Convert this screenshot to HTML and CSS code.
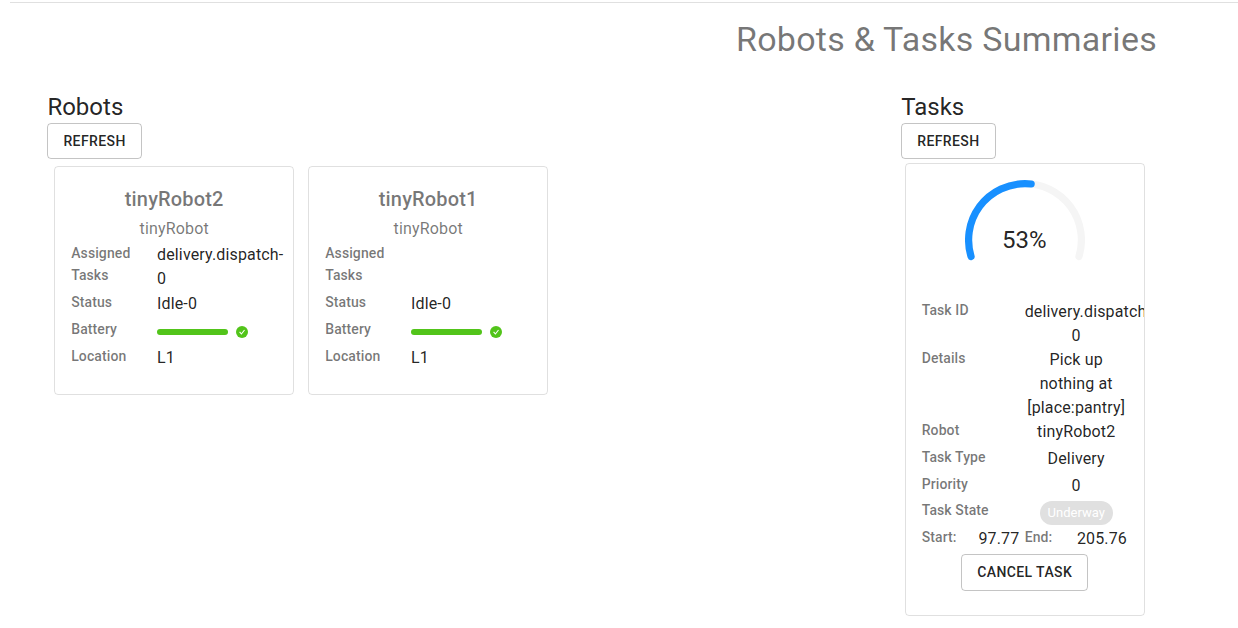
FILE: index.html
```html
<!DOCTYPE html>
<html lang="en">
<head>
    <meta charset="UTF-8">
    <meta name="viewport" content="width=device-width, initial-scale=1.0">
    <title>Robots & Tasks Summaries</title>
    <link rel="stylesheet" href="styles.css">
</head>
<body>
    <div class="app">
        <h4 class="title">Robots &amp; Tasks Summaries</h4>
        <div class="panels">
            <div class="panel">
                <h5>Robots</h5>
                <button class="btn">Refresh</button>
                <div class="robots">
                    <div class="card robot">
                        <h6>tinyRobot2</h6>
                        <p class="fleet">tinyRobot</p>
                        <div class="row tall">
                            <span class="label">Assigned Tasks</span>
                            <span class="value">delivery.dispatch-0</span>
                        </div>
                        <div class="row">
                            <span class="label">Status</span>
                            <span class="value">Idle-0</span>
                        </div>
                        <div class="row">
                            <span class="label">Battery</span>
                            <div class="battery">
                                <div class="bar"></div>
                                <svg width="12" height="12" viewBox="0 0 12 12">
                                    <circle cx="6" cy="6" r="6" fill="#52c41a"/>
                                    <path d="M3.6 5.9L5.4 8L8.5 4" fill="none" stroke="#fff" stroke-width="1.1"/>
                                </svg>
                            </div>
                        </div>
                        <div class="row">
                            <span class="label">Location</span>
                            <span class="value">L1</span>
                        </div>
                    </div>
                    <div class="card robot">
                        <h6>tinyRobot1</h6>
                        <p class="fleet">tinyRobot</p>
                        <div class="row tall">
                            <span class="label">Assigned Tasks</span>
                            <span class="value"></span>
                        </div>
                        <div class="row">
                            <span class="label">Status</span>
                            <span class="value">Idle-0</span>
                        </div>
                        <div class="row">
                            <span class="label">Battery</span>
                            <div class="battery">
                                <div class="bar"></div>
                                <svg width="12" height="12" viewBox="0 0 12 12">
                                    <circle cx="6" cy="6" r="6" fill="#52c41a"/>
                                    <path d="M3.6 5.9L5.4 8L8.5 4" fill="none" stroke="#fff" stroke-width="1.1"/>
                                </svg>
                            </div>
                        </div>
                        <div class="row">
                            <span class="label">Location</span>
                            <span class="value">L1</span>
                        </div>
                    </div>
                </div>
            </div>
            <div class="panel">
                <h5>Tasks</h5>
                <button class="btn">Refresh</button>
                <div class="card task">
                    <div class="gauge">
                        <svg width="120" height="120" viewBox="0 0 120 120">
                            <path class="trail" d="M6.06 76.5A56.4 56.4 0 1 1 113.94 76.5"/>
                            <path class="progress" pathLength="100" stroke-dasharray="53 100" d="M6.06 76.5A56.4 56.4 0 1 1 113.94 76.5"/>
                        </svg>
                        <span class="percent">53%</span>
                    </div>
                    <div class="row fit">
                        <span class="label">Task ID</span>
                        <span class="value">delivery.dispatch-0</span>
                    </div>
                    <div class="row fit">
                        <span class="label">Details</span>
                        <span class="value">Pick up nothing at [place:pantry]</span>
                    </div>
                    <div class="row">
                        <span class="label">Robot</span>
                        <span class="value">tinyRobot2</span>
                    </div>
                    <div class="row">
                        <span class="label">Task Type</span>
                        <span class="value">Delivery</span>
                    </div>
                    <div class="row state">
                        <span class="label">Priority</span>
                        <span class="value">0</span>
                    </div>
                    <div class="row">
                        <span class="label">Task State</span>
                        <span class="value"><span class="chip">Underway</span></span>
                    </div>
                    <div class="row times">
                        <span class="label">Start:</span>
                        <span class="value">97.77</span>
                        <span class="label">End:</span>
                        <span class="value">205.76</span>
                    </div>
                    <button class="btn">Cancel Task</button>
                </div>
            </div>
        </div>
    </div>
</body>
</html>
```
FILE: styles.css
```css
body,
h4,
h5,
h6,
p{
    padding: 0;
    margin: 0;
}
body{
    font-family: Roboto, "Liberation Sans", sans-serif;
    font-size: 16px;
    line-height: 24px;
    letter-spacing: 0.15px;
    color: rgba(0, 0, 0, 0.87);
    background-color: #fff;
    overflow: hidden;
}
.app{
    width: 1873px;
    margin-left: 10px;
    margin-top: 2px;
    border-top: 1px solid #e0e0e0;
}
.title{
    padding-top: 15px;
    font-size: 34px;
    font-weight: 400;
    line-height: 42px;
    letter-spacing: 0.25px;
    text-align: center;
    color: rgba(0, 0, 0, 0.54);
}
.panels{
    display: flex;
    padding-top: 31px;
    padding-left: 37.4px;
}
.panel{
    width: 853.8px;
}
h5{
    font-size: 24px;
    font-weight: 400;
    line-height: 32px;
    letter-spacing: 0;
}
.btn{
    display: block;
    padding: 5px 15px;
    border: 1px solid rgba(0, 0, 0, 0.23);
    border-radius: 4px;
    background-color: transparent;
    font-family: inherit;
    font-size: 14px;
    font-weight: 500;
    line-height: 24px;
    letter-spacing: 0.4px;
    text-transform: uppercase;
    color: rgba(0, 0, 0, 0.87);
}
.card{
    box-sizing: border-box;
    width: 240px;
    padding: 16px;
    border: 1px solid rgba(0, 0, 0, 0.12);
    border-radius: 4px;
    overflow: hidden;
}
.robots{
    display: flex;
    gap: 14px;
    padding: 7px 6.8px;
}
.robot{
    height: 229px;
}
h6{
    font-size: 20px;
    font-weight: 500;
    line-height: 32px;
    letter-spacing: 0.15px;
    text-align: center;
    color: rgba(0, 0, 0, 0.54);
}
.fleet{
    padding: 2px 0 1px;
    text-align: center;
    color: rgba(0, 0, 0, 0.54);
}
.row{
    display: grid;
    grid-template-columns: 5fr 7fr;
    height: 27px;
}
.row.tall{
    height: 49px;
}
.label{
    font-size: 14px;
    font-weight: 500;
    line-height: 22px;
    letter-spacing: 0.1px;
    color: rgba(0, 0, 0, 0.54);
}
.label,
.value{
    min-width: 0;
}
.value{
    margin-top: 1px;
    margin-bottom: -1px;
}
.battery{
    display: flex;
    align-items: center;
    gap: 8px;
    height: 28px;
}
.bar{
    width: 71px;
    height: 6px;
    border-radius: 3px;
    background-color: #52c41a;
}
.task{
    height: 453px;
    margin: 4px 3.5px;
}
.task .row{
    grid-template-columns: 1fr 1fr;
}
.task .row.fit{
    height: auto;
}
.task .row.state{
    height: 26px;
}
.task .row.times{
    grid-template-columns: repeat(4, 1fr);
    height: 28px;
}
.task .value{
    text-align: center;
}
.task .btn{
    margin: 0 auto;
    line-height: 25px;
}
/* svg and percent share one cell */
.gauge{
    display: grid;
    place-items: center;
    margin-bottom: -1px;
    height: 120px;
}
.gauge > *{
    grid-area: 1 / 1;
}
.trail,
.progress{
    fill: none;
    stroke: #f5f5f5;
    stroke-width: 7.2;
    stroke-linecap: round;
}
.progress{
    stroke: #1890ff;
}
.percent{
    font-size: 24px;
    letter-spacing: 0;
    margin-right: 1px;
}
.chip{
    display: inline-block;
    margin-top: 1px;
    padding: 0 8px;
    border-radius: 12px;
    background-color: #e0e0e0;
    font-size: 13px;
    letter-spacing: 0;
    color: #fff;
}
```
